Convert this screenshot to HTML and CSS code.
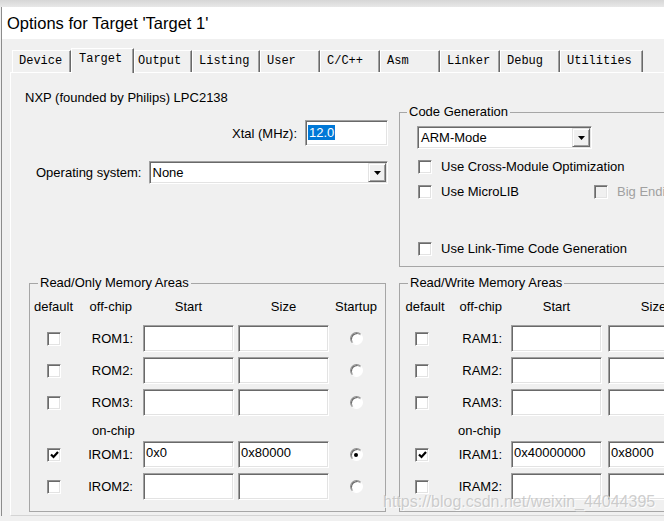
FILE: index.html
```html
<!DOCTYPE html>
<html>
<head>
<meta charset="utf-8">
<title>Options for Target 'Target 1'</title>
<link rel="stylesheet" href="styles.css">
</head>
<body>
<div class="topstrip"></div>
<div class="window">
  <div class="titlebar">Options for Target 'Target 1'</div>
  <div class="tabs">
    <div class="tab" style="width:59px">Device</div>
    <div class="tab sel" style="width:63px">Target</div>
    <div class="tab tight" style="width:58px">Output</div>
    <div class="tab" style="width:68px">Listing</div>
    <div class="tab" style="width:60px">User</div>
    <div class="tab" style="width:60px">C/C++</div>
    <div class="tab" style="width:60px">Asm</div>
    <div class="tab" style="width:60px">Linker</div>
    <div class="tab" style="width:60px">Debug</div>
    <div class="tab" style="width:83px">Utilities</div>
  </div>
  <div class="panel">
    <div class="top">
      <div class="leftcol">
        <div class="device">NXP (founded by Philips) LPC2138</div>
        <div class="xtalrow">
          <span>Xtal (MHz):</span>
          <div class="input xtal"><span class="hl">12.0</span></div>
        </div>
        <div class="osrow">
          <span>Operating system:</span>
          <div class="combo os">
            <span class="ctext">None</span>
            <div class="cbtn"><svg width="7" height="4" viewBox="0 0 7 4"><polygon points="0,0 7,0 3.5,4" fill="#000"/></svg></div>
          </div>
        </div>
      </div>
      <fieldset class="group codegen">
        <legend>Code Generation</legend>
        <div class="cg-inner">
          <div class="combo arm">
            <span class="ctext">ARM-Mode</span>
            <div class="cbtn"><svg width="7" height="4" viewBox="0 0 7 4"><polygon points="0,0 7,0 3.5,4" fill="#000"/></svg></div>
          </div>
          <div class="cbrow first"><span class="chk"></span><span>Use Cross-Module Optimization</span></div>
          <div class="cbrow">
            <div class="cbitem wide"><span class="chk"></span><span>Use MicroLIB</span></div>
            <div class="cbitem disabled"><span class="chk dis"></span><span>Big Endian</span></div>
          </div>
          <div class="cbrow spaced"><span class="chk"></span><span>Use Link-Time Code Generation</span></div>
        </div>
      </fieldset>
    </div>

    <div class="bottom">
      <fieldset class="group mem ro">
        <legend>Read/Only Memory Areas</legend>
        <div class="memgrid">
          <div class="hd c-def">default</div>
          <div class="hd c-lbl">off-chip</div>
          <div class="hd c-in"><div class="hw">Start</div></div>
          <div class="hd c-in"><div class="hw">Size</div></div>
          <div class="hd c-su">Startup</div>

          <div class="c-def"><span class="chk"></span></div>
          <div class="c-lbl">ROM1:</div>
          <div class="c-in"><div class="input"></div></div>
          <div class="c-in"><div class="input"></div></div>
          <div class="c-su"><span class="radio"></span></div>

          <div class="c-def"><span class="chk"></span></div>
          <div class="c-lbl">ROM2:</div>
          <div class="c-in"><div class="input"></div></div>
          <div class="c-in"><div class="input"></div></div>
          <div class="c-su"><span class="radio"></span></div>

          <div class="c-def"><span class="chk"></span></div>
          <div class="c-lbl">ROM3:</div>
          <div class="c-in"><div class="input"></div></div>
          <div class="c-in"><div class="input"></div></div>
          <div class="c-su"><span class="radio"></span></div>

          <div class="onchip">on-chip</div>

          <div class="c-def"><span class="chk on"><svg width="9" height="8" viewBox="0 0 9 8"><polyline points="1,3.5 3.5,6 8,1" fill="none" stroke="#000" stroke-width="2.2"/></svg></span></div>
          <div class="c-lbl">IROM1:</div>
          <div class="c-in"><div class="input">0x0</div></div>
          <div class="c-in"><div class="input">0x80000</div></div>
          <div class="c-su"><span class="radio on"></span></div>

          <div class="c-def"><span class="chk"></span></div>
          <div class="c-lbl">IROM2:</div>
          <div class="c-in"><div class="input"></div></div>
          <div class="c-in"><div class="input"></div></div>
          <div class="c-su"><span class="radio"></span></div>
        </div>
      </fieldset>

      <fieldset class="group mem rw">
        <legend>Read/Write Memory Areas</legend>
        <div class="memgrid">
          <div class="hd c-def">default</div>
          <div class="hd c-lbl">off-chip</div>
          <div class="hd c-in"><div class="hw">Start</div></div>
          <div class="hd c-in"><div class="hw">Size</div></div>

          <div class="c-def"><span class="chk"></span></div>
          <div class="c-lbl">RAM1:</div>
          <div class="c-in"><div class="input"></div></div>
          <div class="c-in"><div class="input"></div></div>

          <div class="c-def"><span class="chk"></span></div>
          <div class="c-lbl">RAM2:</div>
          <div class="c-in"><div class="input"></div></div>
          <div class="c-in"><div class="input"></div></div>

          <div class="c-def"><span class="chk"></span></div>
          <div class="c-lbl">RAM3:</div>
          <div class="c-in"><div class="input"></div></div>
          <div class="c-in"><div class="input"></div></div>

          <div class="onchip">on-chip</div>

          <div class="c-def"><span class="chk on"><svg width="9" height="8" viewBox="0 0 9 8"><polyline points="1,3.5 3.5,6 8,1" fill="none" stroke="#000" stroke-width="2.2"/></svg></span></div>
          <div class="c-lbl">IRAM1:</div>
          <div class="c-in"><div class="input">0x40000000</div></div>
          <div class="c-in"><div class="input">0x8000</div></div>

          <div class="c-def"><span class="chk"></span></div>
          <div class="c-lbl">IRAM2:</div>
          <div class="c-in"><div class="input"></div></div>
          <div class="c-in"><div class="input"></div></div>
        </div>
      </fieldset>
    </div>
  </div>
</div>
<div class="watermark">https://blog.csdn.net/weixin_44044395</div>
</body>
</html>
```

FILE: styles.css
```css
html, body {
  margin: 0;
  padding: 0;
  overflow: hidden;
}
body {
  position: relative;
  width: 664px;
  height: 521px;
  background: #f0f0f0;
  font-family: "Liberation Sans", Arial, sans-serif;
  font-size: 13px;
  color: #000;
}
.topstrip {
  height: 7px;
  background: linear-gradient(#d6d6d6, #e8e8e8);
}
.window {
  margin-left: 1px;
  border-left: 1px solid #8c8c8c;
}
.titlebar {
  height: 32px;
  line-height: 32px;
  background: #fff;
  padding-left: 5px;
  font-size: 16.5px;
  white-space: nowrap;
}

/* tabs */
.tabs {
  display: flex;
  align-items: flex-end;
  height: 33px;
  padding-left: 10px;
  font-family: "Liberation Mono", "Courier New", monospace;
  font-size: 12px;
}
.tab {
  box-sizing: border-box;
  flex: none;
  height: 22px;
  line-height: 21px;
  padding-left: 6px;
  border-top: 1px solid #fff;
  border-left: 1px solid #fff;
  border-right: 1px solid #696969;
  box-shadow: inset -1px 0 0 #a0a0a0;
  white-space: nowrap;
  background: #f0f0f0;
}
.tab.tight { padding-left: 3px; }
.tab.sel {
  position: relative;
  z-index: 1;
  height: 25px;
  margin-bottom: -1px;
  padding-left: 7px;
}

/* panel */
.panel {
  margin-left: 8px;
  margin-right: -20px;
  height: 442px;
  border-top: 1px solid #fff;
  border-left: 1px solid #fff;
  border-bottom: 1px solid #d4d4d4;
}
.top {
  display: flex;
  align-items: flex-start;
}
.leftcol {
  flex: none;
  width: 388px;
}
.device {
  margin-top: 17px;
  padding-left: 14px;
  line-height: 16px;
  white-space: nowrap;
}
.xtalrow {
  display: flex;
  justify-content: flex-end;
  align-items: center;
  gap: 8px;
  margin-top: 14px;
  padding-right: 11px;
}
.osrow {
  display: flex;
  align-items: center;
  gap: 7px;
  margin-top: 15px;
  padding-left: 25px;
  padding-right: 11px;
  white-space: nowrap;
}

/* controls */
.input {
  box-sizing: border-box;
  width: 91px;
  height: 27px;
  background: #fff;
  border: 1px solid;
  border-color: #a0a0a0 #fff #fff #a0a0a0;
  box-shadow: inset 1px 1px 0 #696969, inset -1px -1px 0 #e3e3e3;
  padding: 3px 0 0 2px;
  line-height: 16px;
  white-space: nowrap;
  overflow: hidden;
}
.input.xtal {
  width: 83px;
  height: 26px;
  padding: 4px 0 0 2px;
}
.hl {
  display: inline-block;
  line-height: 15px;
  background: #0078d7;
  color: #fff;
  padding: 0 1px;
}
.combo {
  box-sizing: border-box;
  display: flex;
  align-items: center;
  height: 23px;
  padding: 1px;
  background: #fff;
  border: 1px solid;
  border-color: #a0a0a0 #fff #fff #a0a0a0;
  box-shadow: inset 1px 1px 0 #696969, inset -1px -1px 0 #e3e3e3;
}
.combo.os { flex: 1; }
.combo.arm {
  width: 175px;
  margin-top: 6px;
  margin-left: 17px;
}
.ctext {
  flex: 1;
  padding-left: 2px;
  line-height: 16px;
  white-space: nowrap;
}
.cbtn {
  box-sizing: border-box;
  flex: none;
  display: flex;
  align-items: center;
  justify-content: center;
  width: 18px;
  height: 19px;
  background: #f0f0f0;
  border: 1px solid;
  border-color: #e3e3e3 #696969 #696969 #e3e3e3;
  box-shadow: inset 1px 1px 0 #fff, inset -1px -1px 0 #a0a0a0;
}
.chk {
  box-sizing: border-box;
  flex: none;
  display: inline-flex;
  align-items: center;
  justify-content: center;
  width: 14px;
  height: 14px;
  background: #fff;
  border: 1px solid;
  border-color: #8f8f8f #fff #fff #8f8f8f;
  box-shadow: inset 1px 1px 0 #6a6a6a, inset -1px -1px 0 #e3e3e3;
}
.chk.dis { background: #f0f0f0; }
.chk.on svg { margin: 1px 0 0 1px; }
.radio {
  box-sizing: border-box;
  position: relative;
  display: inline-block;
  width: 13px;
  height: 13px;
  border-radius: 50%;
  background: #fff;
  border: 1px solid;
  border-color: #8f8f8f #fff #fff #8f8f8f;
  box-shadow: inset 1px 1px 0 #6a6a6a;
}
.radio.on::after {
  content: "";
  position: absolute;
  left: 3.5px;
  top: 3.5px;
  width: 4px;
  height: 4px;
  border-radius: 50%;
  background: #000;
}

/* group boxes */
fieldset.group {
  box-sizing: border-box;
  margin: 0;
  padding: 0;
  min-width: 0;
  border: 1px solid #a6a6a6;
}
fieldset.group legend {
  padding: 0 2px;
  margin-left: 7px;
  line-height: 16px;
  white-space: nowrap;
}
fieldset.codegen {
  flex: none;
  width: 300px;
  margin-top: 31px;
}
.cg-inner { padding-bottom: 5px; }
.cbrow {
  display: flex;
  align-items: center;
  height: 25px;
  padding-left: 18px;
  white-space: nowrap;
}
.cbrow.first { margin-top: 5px; }
.cbrow.spaced { margin-top: 32px; }
.cbrow .chk { margin-right: 9px; }
.cbitem {
  display: flex;
  align-items: center;
}
.cbitem.wide { width: 176px; flex: none; }
.disabled { color: #a0a0a0; }

.bottom {
  display: flex;
  align-items: flex-start;
  margin-top: 8px;
}
fieldset.mem legend { margin-left: 8px; }
fieldset.mem.ro {
  flex: none;
  width: 357px;
  margin-left: 18px;
}
fieldset.mem.rw {
  flex: none;
  width: 320px;
  margin-left: 13px;
}
.memgrid {
  display: grid;
  margin-top: 8px;
  padding-bottom: 11px;
  row-gap: 5px;
  grid-template-rows: 21px 27px 27px 27px 15px 27px 27px;
  align-items: center;
  white-space: nowrap;
}
.ro .memgrid {
  padding-left: 3px;
  grid-template-columns: 41px 62px 98px 95px 54px;
}
.rw .memgrid {
  padding-left: 4px;
  grid-template-columns: 42px 59px 97px 97px;
}
.hd {
  align-self: start;
  line-height: 16px;
}
.c-def {
  display: flex;
  justify-content: center;
}
.rw .c-def:not(.hd) {
  justify-content: flex-start;
  padding-left: 11px;
}
.c-lbl {
  text-align: right;
  padding-right: 3px;
}
.ro .hd.c-lbl { padding-right: 4px; }
.c-in {
  display: flex;
  justify-content: flex-end;
}
.hw {
  width: 91px;
  text-align: center;
}
.c-su {
  display: flex;
  justify-content: center;
}
.onchip {
  grid-column: 1 / -1;
  align-self: start;
  height: 15px;
  line-height: 20px;
}
.ro .onchip { padding-left: 59px; }
.rw .onchip { padding-left: 54px; }

.watermark {
  position: absolute;
  left: 383px;
  top: 493px;
  font-size: 16px;
  line-height: 18px;
  color: rgba(190, 190, 190, 0.75);
  text-shadow: 1px 1px 0 rgba(255, 255, 255, 0.8);
  white-space: nowrap;
}
```
